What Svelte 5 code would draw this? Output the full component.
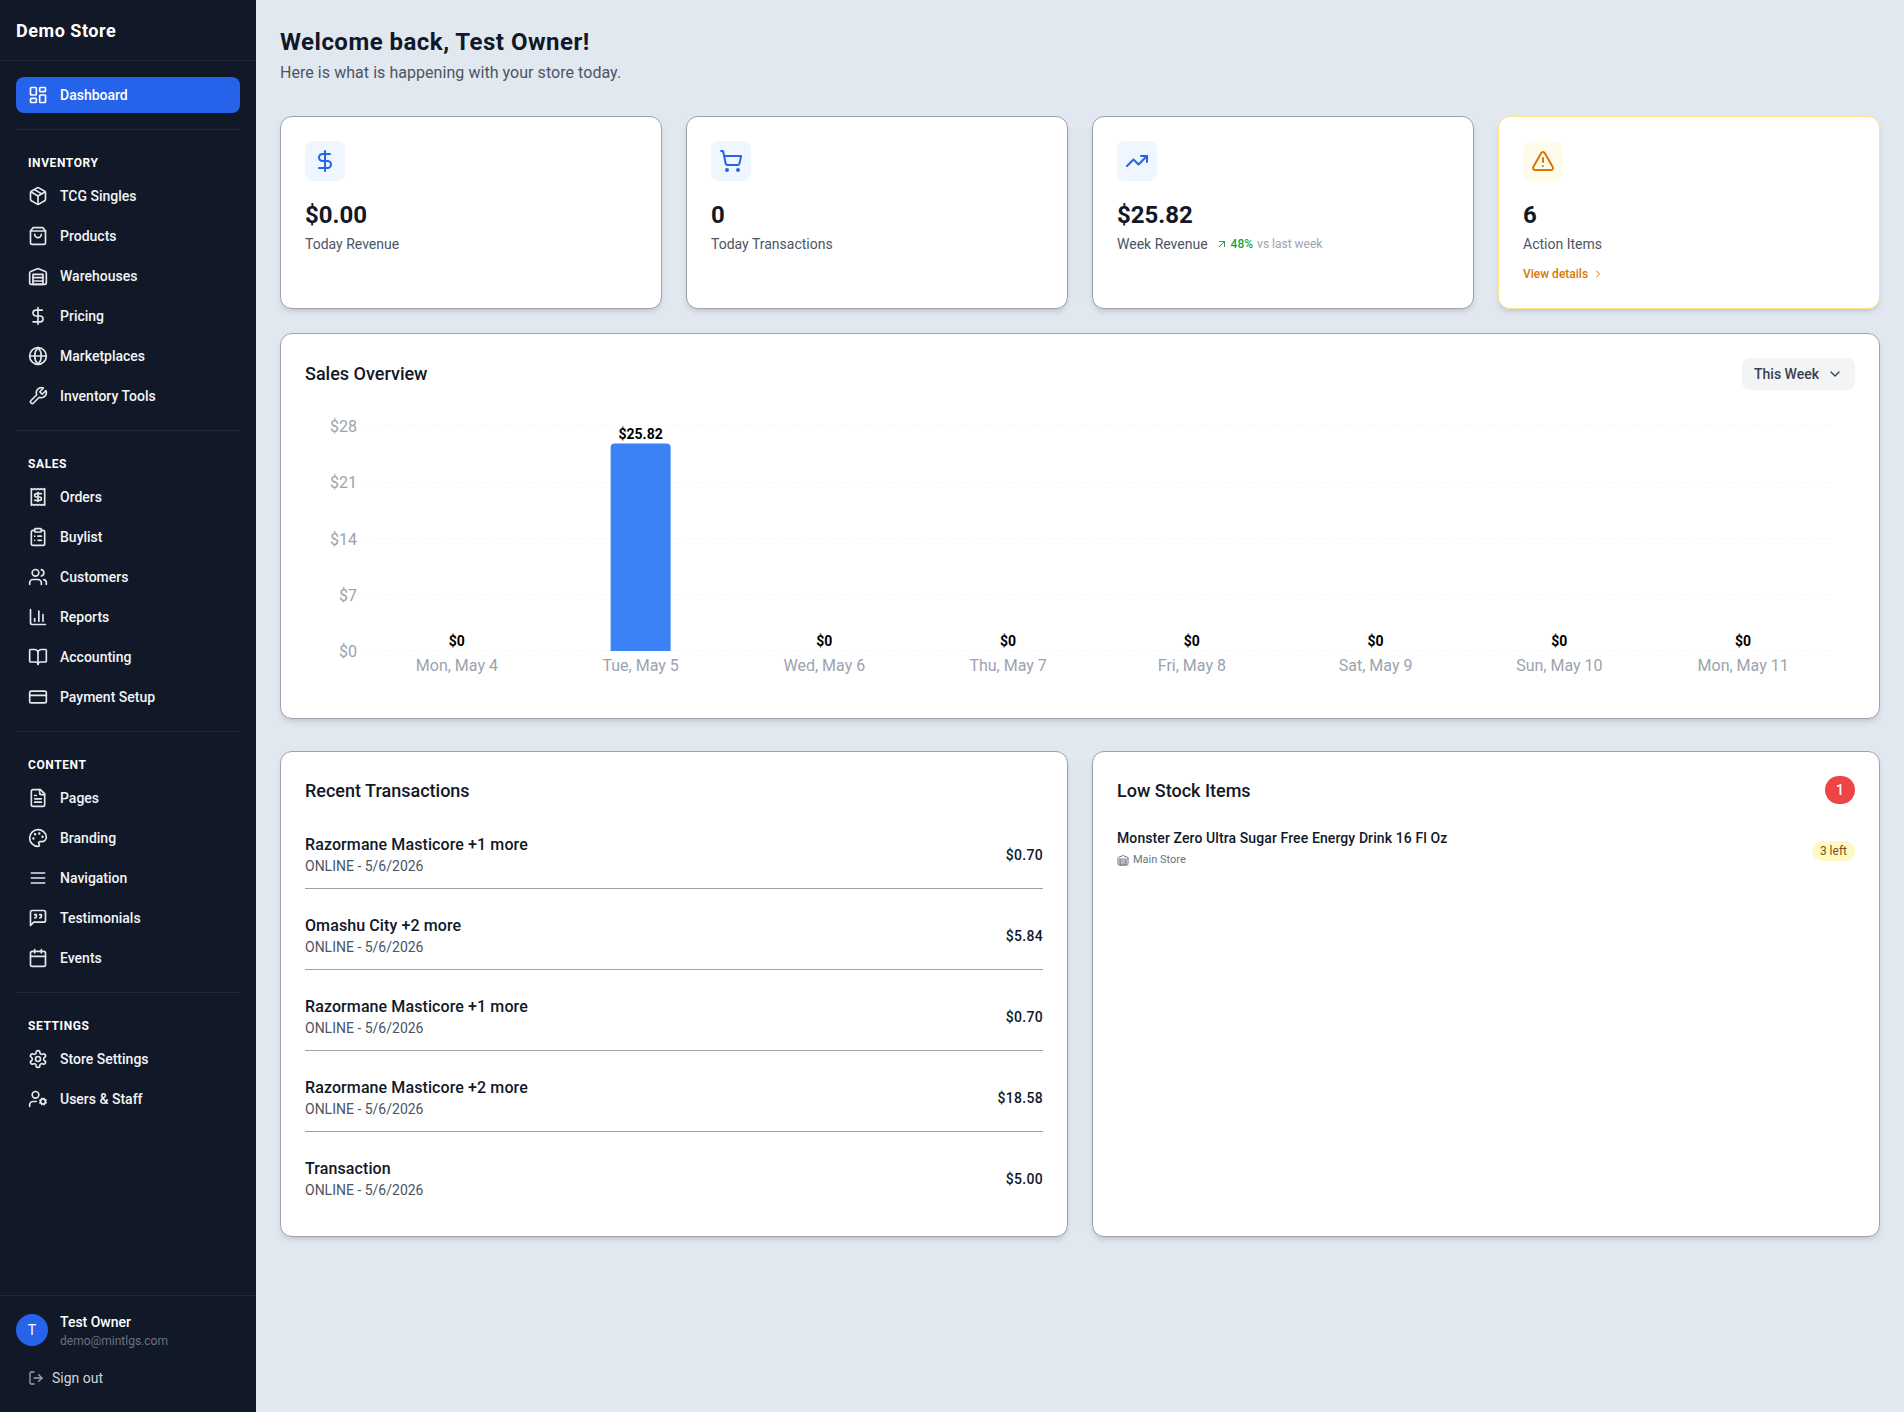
<script>
  const circle = (cx, cy, r) => `M${cx - r} ${cy}a${r} ${r} 0 1 0 ${2 * r} 0a${r} ${r} 0 1 0 ${-2 * r} 0`;
  const rect = (x, y, w, h, r) =>
    `M${x + r} ${y}h${w - 2 * r}a${r} ${r} 0 0 1 ${r} ${r}v${h - 2 * r}a${r} ${r} 0 0 1 ${-r} ${r}h${-(w - 2 * r)}a${r} ${r} 0 0 1 ${-r} ${-r}v${-(h - 2 * r)}a${r} ${r} 0 0 1 ${r} ${-r}z`;

  const icons = {
    dashboard: [rect(3, 3, 7, 9, 1), rect(14, 3, 7, 5, 1), rect(14, 12, 7, 9, 1), rect(3, 16, 7, 5, 1)],
    packageBox: ['m7.5 4.27 9 5.15', 'M21 8a2 2 0 0 0-1-1.73l-7-4a2 2 0 0 0-2 0l-7 4A2 2 0 0 0 3 8v8a2 2 0 0 0 1 1.73l7 4a2 2 0 0 0 2 0l7-4A2 2 0 0 0 21 16Z', 'm3.3 7 8.7 5 8.7-5', 'M12 22V12'],
    bag: ['M6 2 3 6v14a2 2 0 0 0 2 2h14a2 2 0 0 0 2-2V6l-3-4Z', 'M3 6h18', 'M16 10a4 4 0 0 1-8 0'],
    warehouse: ['M22 8.35V20a2 2 0 0 1-2 2H4a2 2 0 0 1-2-2V8.35A2 2 0 0 1 3.26 6.5l8-3.2a2 2 0 0 1 1.48 0l8 3.2A2 2 0 0 1 22 8.35Z', 'M6 18h12', 'M6 14h12', rect(6, 10, 12, 12, 0)],
    dollar: ['M12 2v20', 'M17 5H9.5a3.5 3.5 0 0 0 0 7h5a3.5 3.5 0 0 1 0 7H6'],
    globe: [circle(12, 12, 10), 'M12 2a14.5 14.5 0 0 0 0 20 14.5 14.5 0 0 0 0-20', 'M2 12h20'],
    wrench: ['M14.7 6.3a1 1 0 0 0 0 1.4l1.6 1.6a1 1 0 0 0 1.4 0l3.77-3.77a6 6 0 0 1-7.94 7.94l-6.91 6.91a2.12 2.12 0 0 1-3-3l6.91-6.91a6 6 0 0 1 7.94-7.94l-3.76 3.76z'],
    receipt: ['M4 2v20l2-1 2 1 2-1 2 1 2-1 2 1 2-1 2 1V2l-2 1-2-1-2 1-2-1-2 1-2-1-2 1Z', 'M16 8h-6a2 2 0 1 0 0 4h4a2 2 0 1 1 0 4H8', 'M12 17.5v-11'],
    clipboard: [rect(8, 2, 8, 4, 1), 'M16 4h2a2 2 0 0 1 2 2v14a2 2 0 0 1-2 2H6a2 2 0 0 1-2-2V6a2 2 0 0 1 2-2h2', 'M12 11h4', 'M12 16h4', 'M8 11h.01', 'M8 16h.01'],
    users: ['M16 21v-2a4 4 0 0 0-4-4H6a4 4 0 0 0-4 4v2', circle(9, 7, 4), 'M22 21v-2a4 4 0 0 0-3-3.87', 'M16 3.13a4 4 0 0 1 0 7.75'],
    chart: ['M3 3v16a2 2 0 0 0 2 2h16', 'M18 17V9', 'M13 17V5', 'M8 17v-3'],
    book: ['M12 7v14', 'M3 18a1 1 0 0 1-1-1V4a1 1 0 0 1 1-1h5a4 4 0 0 1 4 4 4 4 0 0 1 4-4h5a1 1 0 0 1 1 1v13a1 1 0 0 1-1 1h-6a3 3 0 0 0-3 3 3 3 0 0 0-3-3z'],
    card: [rect(2, 5, 20, 14, 2), 'M2 10h20'],
    file: ['M15 2H6a2 2 0 0 0-2 2v16a2 2 0 0 0 2 2h12a2 2 0 0 0 2-2V7Z', 'M14 2v4a2 2 0 0 0 2 2h4', 'M10 9H8', 'M16 13H8', 'M16 17H8'],
    palette: ['M12 2C6.5 2 2 6.5 2 12s4.5 10 10 10c.926 0 1.648-.746 1.648-1.688 0-.437-.18-.835-.437-1.125-.29-.289-.438-.652-.438-1.125a1.64 1.64 0 0 1 1.668-1.668h1.996c3.051 0 5.555-2.503 5.555-5.554C21.965 6.012 17.461 2 12 2z', circle(13.5, 6.5, 0.5), circle(17.5, 10.5, 0.5), circle(8.5, 7.5, 0.5), circle(6.5, 12.5, 0.5)],
    menu: ['M4 12h16', 'M4 6h16', 'M4 18h16'],
    quote: ['M21 15a2 2 0 0 1-2 2H7l-4 4V5a2 2 0 0 1 2-2h14a2 2 0 0 1 2 2z', 'M8 12a2 2 0 0 0 2-2V8H8', 'M14 12a2 2 0 0 0 2-2V8h-2'],
    calendar: ['M8 2v4', 'M16 2v4', rect(3, 4, 18, 18, 2), 'M3 10h18'],
    gear: ['M12.22 2h-.44a2 2 0 0 0-2 2v.18a2 2 0 0 1-1 1.73l-.43.25a2 2 0 0 1-2 0l-.15-.08a2 2 0 0 0-2.73.73l-.22.38a2 2 0 0 0 .73 2.73l.15.1a2 2 0 0 1 1 1.72v.51a2 2 0 0 1-1 1.74l-.15.09a2 2 0 0 0-.73 2.73l.22.38a2 2 0 0 0 2.73.73l.15-.08a2 2 0 0 1 2 0l.43.25a2 2 0 0 1 1 1.73V20a2 2 0 0 0 2 2h.44a2 2 0 0 0 2-2v-.18a2 2 0 0 1 1-1.73l.43-.25a2 2 0 0 1 2 0l.15.08a2 2 0 0 0 2.73-.73l.22-.39a2 2 0 0 0-.73-2.73l-.15-.08a2 2 0 0 1-1-1.74v-.5a2 2 0 0 1 1-1.74l.15-.09a2 2 0 0 0 .73-2.73l-.22-.38a2 2 0 0 0-2.73-.73l-.15.08a2 2 0 0 1-2 0l-.43-.25a2 2 0 0 1-1-1.73V4a2 2 0 0 0-2-2z', circle(12, 12, 3)],
    userCog: [circle(18, 15, 3), circle(9, 7, 4), 'M10 15H6a4 4 0 0 0-4 4v2', 'm21.7 16.4-.9-.3', 'm15.2 13.9-.9-.3', 'm16.6 18.7.3-.9', 'm19.1 12.2.3-.9', 'm19.6 18.7-.4-1', 'm16.8 12.3-.4-1', 'm14.3 16.6 1-.4', 'm20.7 13.8 1-.4'],
    logout: ['M9 21H5a2 2 0 0 1-2-2V5a2 2 0 0 1 2-2h4', 'm16 17 5-5-5-5', 'M21 12H9'],
    cart: [circle(8, 21, 1), circle(19, 21, 1), 'M2.05 2.05h2l2.66 12.42a2 2 0 0 0 2 1.58h9.78a2 2 0 0 0 1.95-1.57l1.65-7.43H5.12'],
    trending: ['M22 7 13.5 15.5 8.5 10.5 2 17', 'M16 7h6v6'],
    warning: ['m21.73 18-8-14a2 2 0 0 0-3.48 0l-8 14A2 2 0 0 0 4 21h16a2 2 0 0 0 1.73-3Z', 'M12 9v4', 'M12 17h.01'],
    arrowUpRight: ['M7 7h10v10', 'M7 17 17 7'],
    chevronRight: ['m9 18 6-6-6-6'],
    chevronDown: ['m6 9 6 6 6-6']
  };

  const navGroups = [
    {
      title: 'Inventory',
      items: [
        ['TCG Singles', 'packageBox'],
        ['Products', 'bag'],
        ['Warehouses', 'warehouse'],
        ['Pricing', 'dollar'],
        ['Marketplaces', 'globe'],
        ['Inventory Tools', 'wrench']
      ]
    },
    {
      title: 'Sales',
      items: [
        ['Orders', 'receipt'],
        ['Buylist', 'clipboard'],
        ['Customers', 'users'],
        ['Reports', 'chart'],
        ['Accounting', 'book'],
        ['Payment Setup', 'card']
      ]
    },
    {
      title: 'Content',
      items: [
        ['Pages', 'file'],
        ['Branding', 'palette'],
        ['Navigation', 'menu'],
        ['Testimonials', 'quote'],
        ['Events', 'calendar']
      ]
    },
    {
      title: 'Settings',
      items: [
        ['Store Settings', 'gear'],
        ['Users & Staff', 'userCog']
      ]
    }
  ];

  const transactions = [
    ['Razormane Masticore +1 more', '$0.70'],
    ['Omashu City +2 more', '$5.84'],
    ['Razormane Masticore +1 more', '$0.70'],
    ['Razormane Masticore +2 more', '$18.58'],
    ['Transaction', '$5.00']
  ];

  // chart geometry, in svg units
  const plotLeft = 60;
  const plotRight = 1530;
  const plotTop = 32;
  const plotBottom = 257;
  const maxValue = 28;
  const ticks = [0, 7, 14, 21, 28];
  const days = [
    ['Mon, May 4', 0],
    ['Tue, May 5', 25.82],
    ['Wed, May 6', 0],
    ['Thu, May 7', 0],
    ['Fri, May 8', 0],
    ['Sat, May 9', 0],
    ['Sun, May 10', 0],
    ['Mon, May 11', 0]
  ];
  const slot = (plotRight - plotLeft) / days.length;
  const yFor = (v) => plotBottom - (v / maxValue) * (plotBottom - plotTop);
  const barPath = (x, top) =>
    `M${x} ${plotBottom}V${top + 4}a4 4 0 0 1 4-4h52a4 4 0 0 1 4 4V${plotBottom}z`;
</script>

{#snippet icon(name, size = 20, cls = '')}
  <svg class={cls} width={size} height={size} viewBox="0 0 24 24" fill="none" stroke="currentColor" stroke-width="2" stroke-linecap="round" stroke-linejoin="round">
    {#each icons[name] as d}
      <path {d} />
    {/each}
  </svg>
{/snippet}

<div class="layout">
  <aside class="sidebar">
    <div class="brand">Demo Store</div>
    <nav class="nav">
      <a class="nav-item active" href="#/">
        {@render icon('dashboard')}
        <span>Dashboard</span>
      </a>
      {#each navGroups as group}
        <div class="nav-group">
          <div class="group-title">{group.title}</div>
          {#each group.items as [label, name]}
            <a class="nav-item" href="#/">
              {@render icon(name)}
              <span>{label}</span>
            </a>
          {/each}
        </div>
      {/each}
    </nav>
    <div class="account">
      <div class="user">
        <div class="avatar">T</div>
        <div>
          <div class="user-name">Test Owner</div>
          <div class="user-mail">demo@mintlgs.com</div>
        </div>
      </div>
      <button class="signout">
        {@render icon('logout', 16)}
        <span>Sign out</span>
      </button>
    </div>
  </aside>

  <main class="main">
    <h1>Welcome back, Test Owner!</h1>
    <p class="lead">Here is what is happening with your store today.</p>

    <section class="stats">
      <div class="card stat">
        <div class="stat-icon">{@render icon('dollar', 24)}</div>
        <div class="stat-value">$0.00</div>
        <div class="stat-label">Today Revenue</div>
      </div>
      <div class="card stat">
        <div class="stat-icon">{@render icon('cart', 24)}</div>
        <div class="stat-value">0</div>
        <div class="stat-label">Today Transactions</div>
      </div>
      <div class="card stat">
        <div class="stat-icon">{@render icon('trending', 24)}</div>
        <div class="stat-value">$25.82</div>
        <div class="stat-label">
          Week Revenue
          <span class="trend">
            {@render icon('arrowUpRight', 12)}
            <b>48%</b>
            <em>vs last week</em>
          </span>
        </div>
      </div>
      <div class="card stat warn">
        <div class="stat-icon">{@render icon('warning', 24)}</div>
        <div class="stat-value">6</div>
        <div class="stat-label">Action Items</div>
        <a class="details" href="#/">View details {@render icon('chevronRight', 12)}</a>
      </div>
    </section>

    <section class="card chart-card">
      <div class="card-head">
        <h2>Sales Overview</h2>
        <button class="range">This Week {@render icon('chevronDown', 16)}</button>
      </div>
      <svg class="chart" width="1550" height="300" viewBox="0 0 1550 300">
        {#each ticks as t}
          <line x1={plotLeft} x2={plotRight} y1={yFor(t)} y2={yFor(t)} class="grid" />
          <text x="52" y={yFor(t) + 6} text-anchor="end" class="axis">${t}</text>
        {/each}
        {#each days as [label, value], i}
          {@const cx = plotLeft + slot * (i + 0.5)}
          {#if value > 0}
            <path d={barPath(cx - 30, yFor(value))} class="bar" />
          {/if}
          <text x={cx} y={yFor(value) - 5} text-anchor="middle" class="val">${value}</text>
          <text x={cx} y={plotBottom + 19.5} text-anchor="middle" class="axis">{label}</text>
        {/each}
      </svg>
    </section>

    <section class="lists">
      <div class="card list-card">
        <h2 class="list-title">Recent Transactions</h2>
        {#each transactions as [name, amount], i}
          <div class="txn" class:last={i === transactions.length - 1}>
            <div>
              <div class="txn-name">{name}</div>
              <div class="txn-sub">ONLINE - 5/6/2026</div>
            </div>
            <div class="txn-amount">{amount}</div>
          </div>
        {/each}
      </div>
      <div class="card list-card">
        <div class="low-head">
          <h2>Low Stock Items</h2>
          <span class="count">1</span>
        </div>
        <div class="low-item">
          <div>
            <div class="low-name">Monster Zero Ultra Sugar Free Energy Drink 16 Fl Oz</div>
            <div class="low-store">{@render icon('warehouse', 12)} Main Store</div>
          </div>
          <span class="left">3 left</span>
        </div>
      </div>
    </section>
  </main>
</div>

<style>
  :global(body) {
    margin: 0;
    font-family: Roboto, "Noto Sans", sans-serif;
    background: #e2e8f0;
    color: #111827;
  }

  .layout {
    display: flex;
    min-height: 1412px;
  }

  .sidebar {
    width: 256px;
    flex: none;
    background: #111827;
    color: #fff;
    display: flex;
    flex-direction: column;
  }

  .brand {
    padding: 18px 16px 16px;
    font-size: 18px;
    line-height: 26px;
    font-weight: 700;
    letter-spacing: 0.03em;
    border-bottom: 1px solid #1f2937;
  }

  .nav {
    flex: 1;
    padding: 16px 16px 0;
  }

  .nav-item {
    display: flex;
    align-items: center;
    gap: 12px;
    height: 36px;
    padding: 0 12px;
    margin-bottom: 4px;
    border-radius: 8px;
    color: #f3f4f6;
    font-size: 14px;
    font-weight: 500;
    text-decoration: none;
  }

  .nav-item svg {
    flex: none;
    color: #e5e7eb;
  }

  .nav-item.active {
    background: #2563eb;
    color: #fff;
  }

  .nav-item.active svg {
    color: #fff;
  }

  .nav-group {
    margin-top: 16px;
    padding-top: 24px;
    border-top: 1px solid #1f2937;
  }

  .group-title {
    padding: 2px 12px 0;
    margin-bottom: 8px;
    font-size: 12px;
    line-height: 14px;
    font-weight: 700;
    letter-spacing: 0.05em;
    text-transform: uppercase;
  }

  .account {
    border-top: 1px solid #1f2937;
    padding: 16px 16px 16px;
  }

  .user {
    display: flex;
    align-items: center;
    gap: 12px;
  }

  .avatar {
    width: 32px;
    height: 32px;
    border-radius: 50%;
    background: #2563eb;
    color: #fff;
    font-size: 14px;
    display: flex;
    align-items: center;
    justify-content: center;
  }

  .user-name {
    font-size: 14px;
    line-height: 20px;
    font-weight: 500;
  }

  .user-mail {
    padding-top: 2px;
    font-size: 12px;
    line-height: 14px;
    color: #6b7280;
  }

  .signout {
    margin-top: 12px;
    width: 100%;
    height: 36px;
    padding: 0 12px;
    display: flex;
    align-items: center;
    gap: 8px;
    background: none;
    border: 0;
    color: #d1d5db;
    font: 400 14px Roboto, sans-serif;
    text-align: left;
  }

  .signout svg {
    color: #9ca3af;
  }

  .main {
    flex: 1;
    padding: 24px;
    min-width: 0;
  }

  h1 {
    margin: 0;
    font-size: 24px;
    line-height: 32px;
    font-weight: 700;
    letter-spacing: 0.02em;
    padding-top: 2px;
  }

  .lead {
    margin: 3px 0 31px;
    font-size: 16px;
    line-height: 24px;
    letter-spacing: 0.05px;
    color: #4b5563;
  }

  .stats {
    display: grid;
    grid-template-columns: repeat(4, 1fr);
    gap: 24px;
    margin-bottom: 24px;
  }

  .card {
    background: #fff;
    border: 1px solid #9ca3af;
    border-radius: 12px;
    box-shadow: 0 4px 6px -1px rgba(0, 0, 0, 0.1), 0 2px 4px -2px rgba(0, 0, 0, 0.1);
    padding: 24px;
  }

  .stat {
    height: 193px;
    box-sizing: border-box;
  }

  .stat-icon {
    width: 40px;
    height: 40px;
    border-radius: 8px;
    background: #eff6ff;
    color: #2563eb;
    display: flex;
    align-items: center;
    justify-content: center;
    margin-bottom: 16px;
  }

  .stat-value {
    padding-top: 2px;
    font-size: 24px;
    line-height: 32px;
    font-weight: 700;
  }

  .stat-label {
    margin-top: 3px;
    font-size: 14px;
    line-height: 20px;
    color: #4b5563;
    display: flex;
    align-items: center;
  }

  .trend {
    display: inline-flex;
    align-items: center;
    margin-left: 8px;
    font-size: 12px;
  }

  .trend svg {
    color: #16a34a;
    margin-right: 3px;
  }

  .trend b {
    font-weight: 500;
    color: #16a34a;
  }

  .trend em {
    font-style: normal;
    color: #9ca3af;
    margin-left: 4px;
  }

  .warn {
    border-color: #fde68a;
  }

  .warn .stat-icon {
    background: #fffbeb;
    color: #d97706;
  }

  .details {
    margin-top: 12px;
    display: inline-flex;
    align-items: center;
    gap: 4px;
    font-size: 12px;
    line-height: 16px;
    font-weight: 500;
    color: #d97706;
    text-decoration: none;
  }

  .chart-card {
    margin-bottom: 32px;
  }

  .card-head {
    display: flex;
    align-items: center;
    justify-content: space-between;
    margin-bottom: 4px;
  }

  h2 {
    margin: 0;
    font-size: 18px;
    line-height: 28px;
    font-weight: 500;
  }

  .list-card h2 {
    padding-top: 2px;
    line-height: 26px;
  }

  .range {
    height: 32px;
    padding: 0 12px;
    display: flex;
    align-items: center;
    gap: 8px;
    border: 0;
    border-radius: 8px;
    background: #f3f4f6;
    color: #374151;
    font: 500 14px Roboto, sans-serif;
  }

  .chart {
    display: block;
  }

  .grid {
    stroke: #f3f4f6;
    stroke-dasharray: 3 3;
  }

  .axis {
    font-size: 16px;
    fill: #9ca3af;
  }

  .bar {
    fill: #3b82f6;
  }

  .val {
    font-size: 14px;
    font-weight: 700;
    fill: #000;
  }

  .lists {
    display: grid;
    grid-template-columns: 1fr 1fr;
    gap: 24px;
  }

  .list-title {
    margin-bottom: 16px;
  }

  .txn {
    display: flex;
    align-items: center;
    justify-content: space-between;
    padding: 12px 0;
    margin-bottom: 12px;
    border-bottom: 1px solid #9ca3af;
  }

  .txn.last {
    border-bottom: 0;
    margin-bottom: 0;
  }

  .txn-name {
    padding-top: 2px;
    font-size: 16px;
    line-height: 22px;
    letter-spacing: 0.1px;
    font-weight: 500;
  }

  .txn-sub {
    font-size: 14px;
    line-height: 20px;
    color: #4b5563;
  }

  .txn-amount {
    padding-top: 2px;
    font-size: 14px;
    letter-spacing: 0.3px;
    font-weight: 500;
  }

  .low-head {
    display: flex;
    align-items: center;
    justify-content: space-between;
    margin-bottom: 24px;
  }

  .count {
    min-width: 30px;
    height: 28px;
    border-radius: 999px;
    background: #ef4444;
    color: #fff;
    font-size: 14px;
    font-weight: 500;
    display: flex;
    align-items: center;
    justify-content: center;
  }

  .low-item {
    display: flex;
    align-items: center;
    justify-content: space-between;
  }

  .low-name {
    font-size: 14px;
    line-height: 20px;
    letter-spacing: 0.1px;
    font-weight: 500;
  }

  .low-store {
    margin-top: 4px;
    display: flex;
    align-items: center;
    gap: 4px;
    font-size: 11px;
    line-height: 16px;
    color: #6b7280;
  }

  .left {
    margin-top: 5px;
    padding: 2px 8px;
    border-radius: 999px;
    background: #fef9c3;
    color: #854d0e;
    font-size: 12px;
    line-height: 16px;
  }
</style>
